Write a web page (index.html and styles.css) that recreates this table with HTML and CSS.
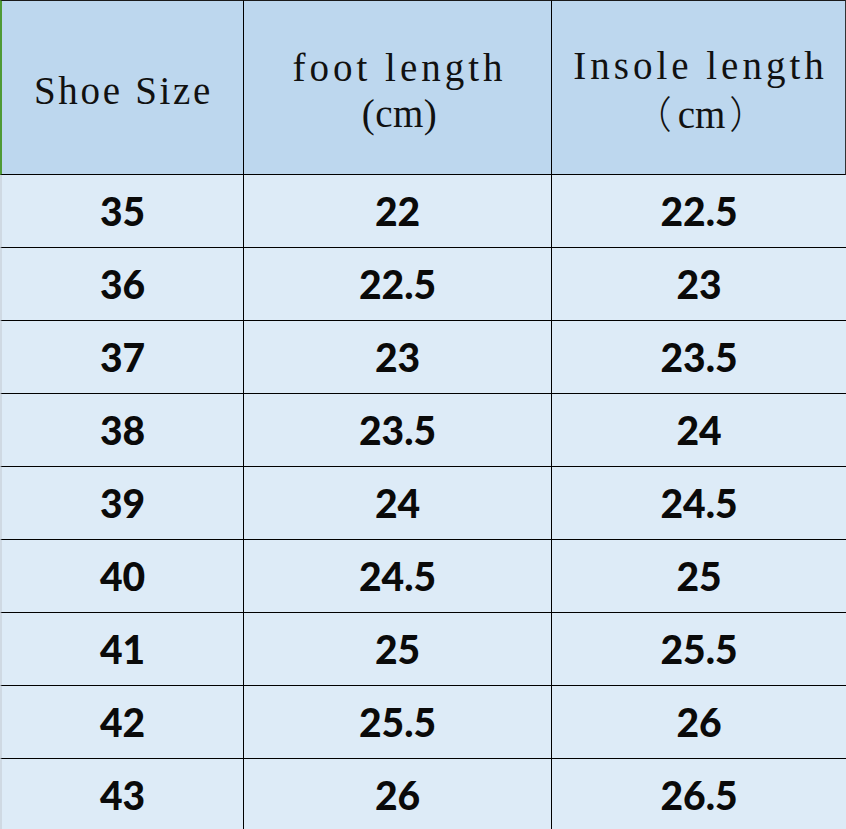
FILE: index.html
```html
<!DOCTYPE html>
<html>
<head>
<meta charset="utf-8">
<link rel="stylesheet" href="styles.css">
</head>
<body>
<div class="sheet">
  <div class="cell head first"><span class="htext">Shoe Size</span></div>
  <div class="cell head"><span class="htext">foot length<br><span class="unit">(cm)</span></span></div>
  <div class="cell head last"><span class="htext">Insole length<br><span class="unit2"><span class="fw open">（</span>cm<span class="fw close">）</span></span></span></div>

  <div class="cell first">35</div><div class="cell">22</div><div class="cell last">22.5</div>
  <div class="cell first">36</div><div class="cell">22.5</div><div class="cell last">23</div>
  <div class="cell first">37</div><div class="cell">23</div><div class="cell last">23.5</div>
  <div class="cell first">38</div><div class="cell">23.5</div><div class="cell last">24</div>
  <div class="cell first">39</div><div class="cell">24</div><div class="cell last">24.5</div>
  <div class="cell first">40</div><div class="cell">24.5</div><div class="cell last">25</div>
  <div class="cell first">41</div><div class="cell">25</div><div class="cell last">25.5</div>
  <div class="cell first">42</div><div class="cell">25.5</div><div class="cell last">26</div>
  <div class="cell first">43</div><div class="cell">26</div><div class="cell last">26.5</div>
</div>
</body>
</html>
```
FILE: styles.css
```css
html, body {
  margin: 0;
  padding: 0;
  background: #ddebf7;
}
.sheet {
  display: grid;
  grid-template-columns: 244px 308px 294px;
  grid-template-rows: 175px repeat(9, 73px);
  width: 846px;
  height: 829px;
  overflow: hidden;
}
.cell {
  box-sizing: border-box;
  display: flex;
  align-items: center;
  justify-content: center;
  background: #ddebf7;
  border-right: 1px solid #000;
  border-bottom: 1px solid #000;
  font-family: "Lato", "Liberation Sans", sans-serif;
  font-weight: 900;
  font-size: 39px;
  color: #0a0a0a;
  padding-top: 0;
}
.cell.first {
  border-left: 2px solid #cfd9e3;
}
.cell.last {
  border-right: none;
}
.cell.head {
  background: #bdd7ee;
  border-top: 1px solid #1a1a1a;
  font-family: "Liberation Serif", "Noto Sans CJK SC", serif;
  font-weight: 400;
  font-size: 39px;
  color: #111;
  text-align: center;
  padding-top: 6px;
}
.cell.head.first {
  border-left: 2px solid #4f9a35;
}
.cell.head.last {
  border-right: 1px solid #333;
}
.htext {
  letter-spacing: 4px;
  line-height: 46px;
  padding-left: 4px;
}
.cell.first .htext {
  letter-spacing: 2.7px;
  padding-left: 2px;
}
.unit {
  letter-spacing: 0.5px;
}
.unit2 {
  letter-spacing: 0;
}
.fw {
  font-family: "Noto Sans CJK SC", sans-serif;
  font-weight: 300;
  font-size: 38px;
}
.fw.open {
  margin-right: 6px;
}
.fw.close {
  margin-left: 4px;
}
```
